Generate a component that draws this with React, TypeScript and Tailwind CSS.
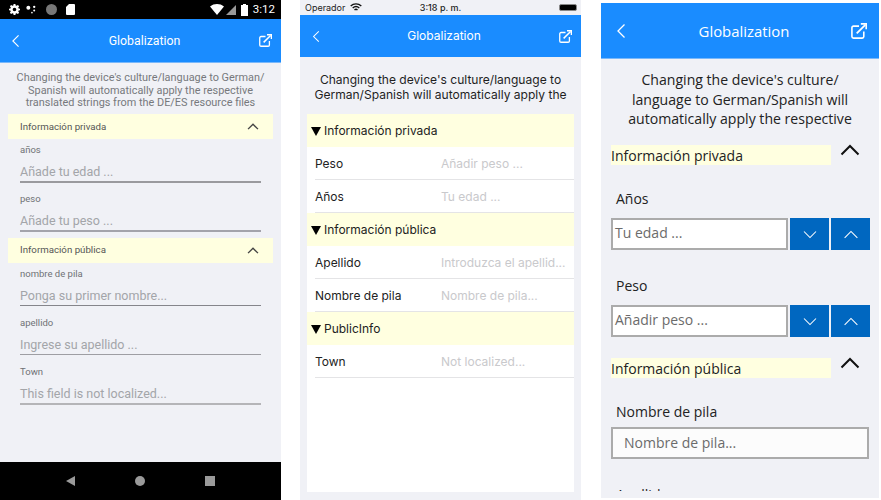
import React from "react";

const Back = ({ c = "w-[10px] h-[16px]" }: { c?: string }) => (
  <svg viewBox="0 0 10 16" className={c} fill="none" stroke="white" strokeWidth="1.3">
    <path d="M8.5 1.5 L2 8 L8.5 14.5" />
  </svg>
);
const Ext = ({ c = "w-[13px] h-[13px]" }: { c?: string }) => (
  <svg viewBox="0 0 14 14" className={c} fill="none" stroke="white" strokeWidth="1.4">
    <path d="M7 2.7 H2.2 A1.4 1.4 0 0 0 .8 4.1 V11.8 A1.4 1.4 0 0 0 2.2 13.2 H9.8 A1.4 1.4 0 0 0 11.2 11.8 V7.5" />
    <path d="M5 9 L12.5 1.6" strokeWidth="1.6" />
    <path d="M8.6 .8 H13.3 V5.5" strokeWidth="1.4" />
  </svg>
);
const Chevron = ({ c, stroke = "#333", w = 1.6 }: { c: string; stroke?: string; w?: number }) => (
  <svg viewBox="0 0 20 12" className={c} fill="none" stroke={stroke} strokeWidth={w}>
    <path d="M1.5 10.5 L10 2 L18.5 10.5" />
  </svg>
);
const ChevronDown = ({ c }: { c: string }) => (
  <svg viewBox="0 0 20 12" className={c} fill="none" stroke="white" strokeWidth="1.4">
    <path d="M2 2 L10 10 L18 2" />
  </svg>
);

function AndroidField({ label, ph, line }: { label: string; ph: string; line: string }) {
  return (
    <div className="mx-5 flex flex-col h-[49.3px]">
      <div className="text-[9.5px] leading-[12px] text-[#6f7175] mt-[5px]">{label}</div>
      <div className="text-[12.5px] leading-[18px] text-[#a3a5a9] mt-[7px]">{ph}</div>
      <div className={`h-[1.5px] ${line}`} />
    </div>
  );
}
function AndroidHead({ t }: { t: string }) {
  return (
    <div className="mx-2 h-[25px] bg-[#ffffe0] flex items-center justify-between pl-[12px] pr-[14px] text-[9.7px] text-[#555]">
      <span className="pt-[1px]">{t}</span>
      <Chevron c="w-[12px] h-[7px]" stroke="#444" w={2.4} />
    </div>
  );
}

function Android() {
  return (
    <div className="w-[281px] h-[500px] flex flex-col bg-[#f0f1f6] font-['Roboto',sans-serif]">
      <div className="h-[19px] bg-black flex items-center pl-[9px] pr-[6px] text-white">
        <svg viewBox="0 0 12 12" className="w-[11px] h-[11px]" fill="white">
          <path fillRule="evenodd" d="M5 0h2l.3 1.6 1 .4L9.7 1l1.4 1.4-1 1.4.4 1 1.6.3v1.8l-1.6.3-.4 1 1 1.4L9.7 11l-1.4-1-1 .4L7 12H5l-.3-1.6-1-.4L2.300 11 .9 9.600l1-1.400-.4-1L0 6.900V5.100l1.600-.3.4-1-1-1.400L2.300 1l1.400 1 1-.4zM6 4a2 2 0 1 0 0 4 2 2 0 0 0 0-4z" />
        </svg>
        <svg viewBox="0 0 12 10" className="w-[11px] h-[9px] ml-[6px]" fill="white">
          <circle cx="2.500" cy="3" r="2.200" />
          <circle cx="9" cy="2" r="1.300" />
          <circle cx="9" cy="6" r="1.100" />
          <circle cx="6.500" cy="8.500" r=".9" />
        </svg>
        <div className="w-[11px] h-[11px] rounded-full bg-[#777] ml-[9px]" />
        <svg viewBox="0 0 9 11" className="w-[9px] h-[11px] ml-[9px]" fill="white">
          <path d="M3 0h5a1 1 0 0 1 1 1v9a1 1 0 0 1-1 1H1a1 1 0 0 1-1-1V3z" />
        </svg>
        <svg viewBox="0 0 14 11" className="w-[14px] h-[11px] ml-auto" fill="white">
          <path d="M0 2.500C4 -.8 10 -.8 14 2.500L7 11z" />
        </svg>
        <svg viewBox="0 0 10 10" className="w-[10px] h-[10px] ml-[2px]" fill="#999">
          <path d="M10 0V10H0z" />
        </svg>
        <svg viewBox="0 0 7 12" className="w-[7px] h-[12px] ml-[5px]" fill="white">
          <path d="M2 0h3v1h2v11H0V1h2z" />
        </svg>
        <span className="text-[11.5px] ml-[5px] leading-none">3:12</span>
      </div>
      <div className="h-[43px] bg-[#1a8cff] flex items-center justify-between pl-[11px] pr-[9px] relative">
        <Back c="w-[9px] h-[14px]" />
        <span className="absolute left-[8px] right-0 pt-[1px] text-center text-[12.3px] text-white">Globalization</span>
        <Ext />
      </div>
      <div className="h-px bg-[#79b8fb]" />
      <div className="text-[10.9px] leading-[12.700px] text-[#77797d] text-center pt-[9px] h-[51px]">
        Changing the device's culture/language to German/
        <br />
        Spanish will automatically apply the respective
        <br />
        translated strings from the DE/ES resource files
      </div>
      <AndroidHead t="Información privada" />
      <AndroidField label="años" ph="Añade tu edad ..." line="bg-[#9a9a9e]" />
      <AndroidField label="peso" ph="Añade tu peso ..." line="bg-[#a3a3ab]" />
      <AndroidHead t="Información pública" />
      <AndroidField label="nombre de pila" ph="Ponga su primer nombre..." line="bg-[#85858b]" />
      <AndroidField label="apellido" ph="Ingrese su apellido ..." line="bg-[#9e9ea3]" />
      <AndroidField label="Town" ph="This field is not localized..." line="bg-[#b5b5b8]" />
      <div className="flex-1" />
      <div className="h-[38px] bg-black flex items-center justify-center gap-[60px]">
        <svg viewBox="0 0 9 10" className="w-[9px] h-[10px]" fill="#9a9a9a">
          <path d="M9 0V10L0 5z" />
        </svg>
        <div className="w-[10px] h-[10px] rounded-full bg-[#9a9a9a]" />
        <div className="w-[10px] h-[10px] bg-[#9a9a9a]" />
      </div>
    </div>
  );
}

function IosRow({ l, p }: { l: string; p: string }) {
  return (
    <div className="h-[33px] ml-2 pt-[1px] border-b border-[#e4e4e6] flex items-center text-[12px] text-[#222]">
      <span className="w-[126px]">{l}</span>
      <span className="text-[#c9c9cc] whitespace-nowrap">{p}</span>
    </div>
  );
}
function IosHead({ t }: { t: string }) {
  return (
    <div className="h-[33px] bg-[#ffffe0] flex items-center pl-[4px] pt-[1px] text-[12px] text-[#222]">
      <span className="w-0 h-0 border-l-[5px] border-r-[5px] border-t-[9px] border-l-transparent border-r-transparent border-t-black mr-[3px]" />
      {t}
    </div>
  );
}

function Ios() {
  return (
    <div className="w-[281px] h-[500px] flex flex-col bg-[#f0f1f6] font-['Inter',sans-serif]">
      <div className="h-[15px] flex items-center justify-between pl-[5px] pr-[4px] relative text-[9px] text-[#222]">
        <div className="flex items-center gap-[5px]">
          <span>Operador</span>
          <svg viewBox="0 0 12 9" className="w-[12px] h-[9px]" fill="none" stroke="#111" strokeWidth="1.400">
            <path d="M.7 3C3.700 .2 8.300 .2 11.300 3" />
            <path d="M2.700 5C4.700 3.300 7.300 3.300 9.300 5" />
            <path d="M4.500 7C5.400 6.200 6.600 6.200 7.500 7" />
          </svg>
        </div>
        <span className="absolute left-0 right-0 text-center font-medium">3:18 p. m.</span>
        <div className="w-[18px] h-[7px] bg-black rounded-[2px] border border-[#888]" />
      </div>
      <div className="h-[42px] bg-[#1a8cff] flex items-center justify-between pl-[12px] pr-[9px] relative">
        <Back c="w-[8px] h-[13px]" />
        <span className="absolute left-[7px] right-0 text-center text-[12px] text-white">Globalization</span>
        <Ext />
      </div>
      <div className="h-[57px] text-[12.05px] leading-[15px] text-[#1f1f1f] text-center pt-[15px] overflow-hidden">
        Changing the device's culture/language to
        <br />
        German/Spanish will automatically apply the
      </div>
      <div className="mx-[7px] h-[378px] bg-white flex flex-col">
        <IosHead t="Información privada" />
        <IosRow l="Peso" p="Añadir peso ..." />
        <IosRow l="Años" p="Tu edad ..." />
        <IosHead t="Información pública" />
        <IosRow l="Apellido" p="Introduzca el apellid..." />
        <IosRow l="Nombre de pila" p="Nombre de pila..." />
        <IosHead t="PublicInfo" />
        <IosRow l="Town" p="Not localized..." />
      </div>
    </div>
  );
}

function UwpNumeric({ label, ph, top }: { label: string; ph: string; top: string }) {
  return (
    <div className={`flex flex-col ${top}`}>
      <div className="ml-[15px] text-[14px] leading-[18px] text-[#222]">{label}</div>
      <div className="flex mt-[10px] ml-[10px] h-[32px]">
        <div className="w-[177px] h-full border-2 border-[#ababab] bg-white text-[14px] text-[#6b6b6b] flex items-center pl-[2px] pb-[3px]">{ph}</div>
        <div className="w-[39px] ml-[2px] h-full bg-[#0067c0] flex items-center justify-center">
          <ChevronDown c="w-[16px] h-[9px]" />
        </div>
        <div className="w-[39px] ml-[2px] h-full bg-[#0067c0] flex items-center justify-center">
          <Chevron c="w-[16px] h-[9px]" stroke="white" w={1.400} />
        </div>
      </div>
    </div>
  );
}
function UwpHead({ t, top }: { t: string; top: string }) {
  return (
    <div className={`flex ml-[10px] ${top}`}>
      <div className="w-[220px] h-[20px] bg-[#ffffe0] pt-[1px] text-[14px] leading-[20px] text-[#222]">{t}</div>
      <Chevron c="w-[20px] h-[12px] ml-[9px] -mt-[1px]" stroke="#111" w={2} />
    </div>
  );
}

function Uwp() {
  return (
    <div className="w-[278px] h-[500px] pt-[3px] pb-[2px] font-['Open_Sans','Noto_Sans',sans-serif]">
      <div className="h-full bg-[#f0f1f6] flex flex-col overflow-hidden">
        <div className="h-[55px] shrink-0 bg-[#1a8cff] flex items-center justify-between pl-[15px] pr-[12px] relative">
          <Back c="w-[10px] h-[16px]" />
          <span className="absolute left-[8px] right-0 pt-[1px] text-center text-[14.9px] text-white">Globalization</span>
          <Ext c="w-[16px] h-[16px]" />
        </div>
        <div className="h-px shrink-0 bg-[#79b8fb]" />
        <div className="shrink-0 h-[86px] text-[14.100px] leading-[19.500px] text-[#222] text-center pt-[11px]">
          Changing the device's culture/
          <br />
          language to German/Spanish will
          <br />
          automatically apply the respective
        </div>
        <UwpHead t="Información privada" top="shrink-0" />
        <div className="shrink-0"><UwpNumeric label="Años" ph="Tu edad ..." top="mt-[25px]" /></div>
        <div className="shrink-0"><UwpNumeric label="Peso" ph="Añadir peso ..." top="mt-[27px]" /></div>
        <UwpHead t="Información pública" top="shrink-0 mt-[21px]" />
        <div className="shrink-0 ml-[15px] mt-[25px] text-[14px] leading-[18px] text-[#222]">Nombre de pila</div>
        <div className="shrink-0 mx-[10px] mt-[6px] h-[32px] border-2 border-[#ababab] bg-[#fcfcfc] text-[14px] text-[#6b6b6b] flex items-center pl-[11px] pb-[2px]">Nombre de pila...</div>
        <div className="shrink-0 h-[32px] pl-[15px] pt-[27px] overflow-hidden text-[14px] leading-[18px] text-[#222]">Apellido</div>
      </div>
    </div>
  );
}

export default function App() {
  return (
    <div className="w-[881px] h-[500px] bg-white flex overflow-hidden">
      <Android />
      <div className="ml-[19px]"><Ios /></div>
      <div className="ml-[20px]"><Uwp /></div>
    </div>
  );
}
